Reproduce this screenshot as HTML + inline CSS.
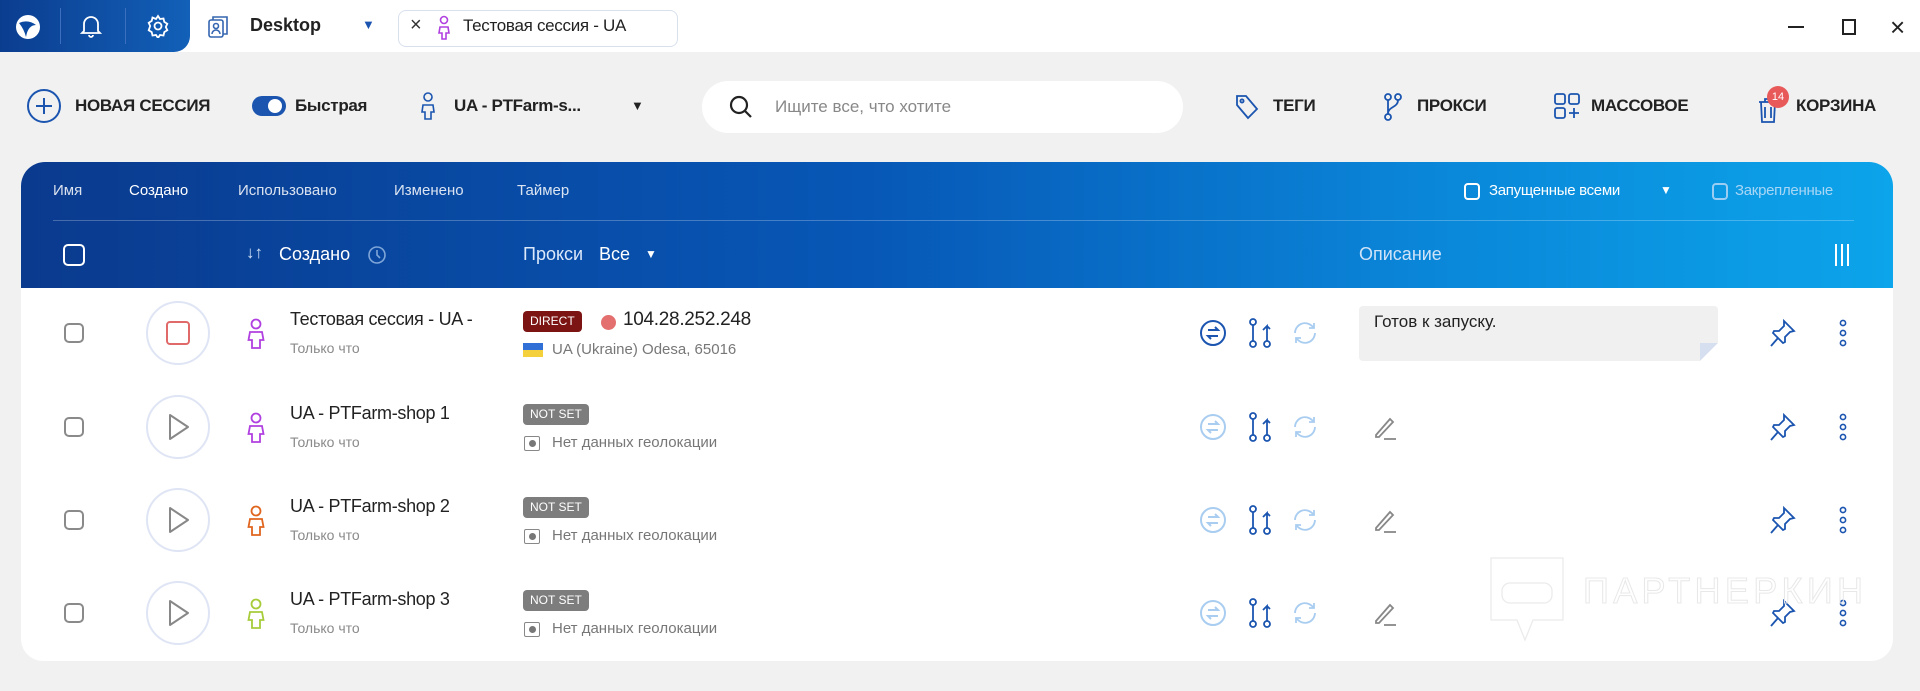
<!DOCTYPE html>
<html><head><meta charset="utf-8"><style>
*{margin:0;padding:0;box-sizing:border-box}
body{width:1920px;height:691px;background:#f1f1f1;font-family:"Liberation Sans","DejaVu Sans",sans-serif;position:relative;overflow:hidden;color:#222}
.a{position:absolute;white-space:nowrap}
.tb{position:absolute;left:0;top:0;width:1920px;height:52px;background:#fff}
.bluetab{position:absolute;left:0;top:0;width:190px;height:52px;background:linear-gradient(90deg,#0b3d8f,#1260b8);border-bottom-right-radius:16px}
.hdr{position:absolute;left:21px;top:162px;width:1872px;height:126px;border-radius:24px 24px 0 0;background:linear-gradient(90deg,#0a3a8e 0%,#0757b6 45%,#0a86d8 75%,#0ca4ea 100%)}
.body{position:absolute;left:21px;top:288px;width:1872px;height:373px;background:#fff;border-radius:0 0 22px 22px}
.hw{color:#fff;font-size:15px}
.cb{position:absolute;width:20px;height:20px;border:2px solid #8a8a8a;border-radius:5px}
.ring{position:absolute;width:64px;height:64px;border:2px solid #dfe5f4;border-radius:50%}
.nm{font-size:18px;color:#222;letter-spacing:-0.3px}
.sub{font-size:14px;color:#8a8a8a}
.badge{position:absolute;height:21px;padding:0 7px;border-radius:4px;color:#fff;font-size:12px;line-height:21px}
.geo{font-size:15px;color:#777}
.tool{font-size:17px;font-weight:bold;color:#222;letter-spacing:-0.3px}
</style></head><body>
<div class="tb"></div>
<div class="bluetab"></div>
<svg class="a" style="left:14px;top:13px" width="28" height="28" viewBox="0 0 28 28"><circle cx="14" cy="14" r="12" fill="#fff"/><path d="M5 10 Q14 6 22 12 Q14 12 12 24 Q10 16 5 10Z" fill="#0b4aa0"/></svg>
<div class="a" style="left:60px;top:8px;width:1px;height:36px;background:#3c6fc0"></div>
<svg class="a" style="left:80px;top:14px" width="22" height="24" viewBox="0 0 22 24" fill="none" stroke="#fff" stroke-width="1.8"><path d="M4 17V10a7 7 0 0 1 14 0v7l2 2H2z"/><path d="M9 21a2 2 0 0 0 4 0"/></svg>
<div class="a" style="left:125px;top:8px;width:1px;height:36px;background:#3c6fc0"></div>
<svg class="a" style="left:146px;top:14px" width="24" height="24" viewBox="0 0 24 24" fill="none" stroke="#fff" stroke-width="1.8"><circle cx="12" cy="12" r="3.5"/><path d="M12 2l2 3 3.5-.5.8 3.4 3 1.9-1.5 3.2 1.5 3.2-3 1.9-.8 3.4-3.5-.5-2 3-2-3-3.5.5-.8-3.4-3-1.9L4.2 12 2.7 8.8l3-1.9.8-3.4L10 5z"/></svg>
<svg class="a" style="left:206px;top:14px" width="24" height="26" viewBox="0 0 24 26" fill="none" stroke="#3566b0" stroke-width="1.6"><rect x="3" y="6" width="14" height="17" rx="2"/><path d="M7 6V3h14v17h-4"/><circle cx="10" cy="12" r="2.5"/><path d="M6 20a4 4 0 0 1 8 0"/></svg>
<div class="a" style="left:250px;top:15px;font-size:18px;font-weight:bold;color:#222">Desktop</div>
<div class="a" style="left:362px;top:17px;font-size:13px;color:#1b55b0">▼</div>
<div class="a" style="left:398px;top:10px;width:280px;height:37px;border:1px solid #d8e0ee;border-radius:8px;background:#fff"></div>
<div class="a" style="left:410px;top:14px;font-size:20px;color:#333">×</div>
<svg class="a" style="left:437px;top:15px" width="14" height="26" viewBox="0 0 14 26" fill="none" stroke="#b040e0" stroke-width="1.6"><circle cx="7" cy="5" r="3.5"/><path d="M3 12h8l1 6H9v6H5v-6H2z"/></svg>
<div class="a" style="left:463px;top:16px;font-size:17px;color:#222;letter-spacing:-0.3px">Тестовая сессия - UA</div>
<div class="a" style="left:1788px;top:26px;width:16px;height:2px;background:#222"></div>
<div class="a" style="left:1842px;top:19px;width:14px;height:16px;border:2px solid #222"></div>
<div class="a" style="left:1890px;top:12px;font-size:26px;color:#222">×</div>

<svg class="a" style="left:26px;top:88px" width="36" height="36" viewBox="0 0 36 36" fill="none" stroke="#1b55b0" stroke-width="2"><circle cx="18" cy="18" r="16"/><path d="M18 10v16M10 18h16"/></svg>
<div class="a tool" style="left:75px;top:96px">НОВАЯ СЕССИЯ</div>
<div class="a" style="left:252px;top:96px;width:34px;height:20px;border-radius:10px;background:#1b55b0"></div>
<div class="a" style="left:268px;top:99px;width:14px;height:14px;border-radius:50%;background:#fff"></div>
<div class="a tool" style="left:295px;top:96px">Быстрая</div>
<svg class="a" style="left:420px;top:91px" width="16" height="30" viewBox="0 0 16 30" fill="none" stroke="#1b55b0" stroke-width="1.6"><circle cx="8" cy="6" r="4"/><path d="M3 14h10l1 7h-3v7H5v-7H2z"/></svg>
<div class="a tool" style="left:454px;top:96px">UA - PTFarm-s...</div>
<div class="a" style="left:631px;top:98px;font-size:13px">▼</div>
<div class="a" style="left:702px;top:81px;width:481px;height:52px;border-radius:26px;background:#fff"></div>
<svg class="a" style="left:727px;top:93px" width="28" height="28" viewBox="0 0 28 28" fill="none" stroke="#222" stroke-width="2.2"><circle cx="12" cy="12" r="8"/><path d="M18 18l6 6"/></svg>
<div class="a" style="left:775px;top:97px;font-size:17px;color:#888">Ищите все, что хотите</div>
<svg class="a" style="left:1234px;top:93px" width="26" height="28" viewBox="0 0 26 28" fill="none" stroke="#1b55b0" stroke-width="1.8"><path d="M3 3h9l11 13-9 9L3 12z"/><circle cx="8" cy="8" r="1.6"/></svg>
<div class="a tool" style="left:1273px;top:96px">ТЕГИ</div>
<svg class="a" style="left:1382px;top:92px" width="22" height="30" viewBox="0 0 22 30" fill="none" stroke="#1b55b0" stroke-width="1.8"><circle cx="6" cy="5" r="3"/><circle cx="16" cy="5" r="3"/><circle cx="6" cy="25" r="3"/><path d="M6 8v14M16 8c0 8-10 6-10 14"/></svg>
<div class="a tool" style="left:1417px;top:96px">ПРОКСИ</div>
<svg class="a" style="left:1553px;top:92px" width="28" height="28" viewBox="0 0 28 28" fill="none" stroke="#1b55b0" stroke-width="1.8"><rect x="2" y="2" width="10" height="10" rx="2"/><rect x="16" y="2" width="10" height="10" rx="2"/><rect x="2" y="16" width="10" height="10" rx="2"/><path d="M21 16v10M16 21h10"/></svg>
<div class="a tool" style="left:1591px;top:96px">МАССОВОЕ</div>
<svg class="a" style="left:1757px;top:96px" width="22" height="28" viewBox="0 0 22 28" fill="none" stroke="#1b55b0" stroke-width="1.8"><path d="M2 6h18M4 6l1 20h12l1-20M8 11v11M14 11v11M8 6V3h6v3"/></svg>
<div class="a" style="left:1767px;top:86px;width:22px;height:22px;border-radius:50%;background:#e85a5a;color:#fff;font-size:11px;line-height:22px;text-align:center">14</div>
<div class="a tool" style="left:1796px;top:96px">КОРЗИНА</div>

<div class="hdr"></div>
<div class="a hw" style="left:53px;top:182px;opacity:.85">Имя</div>
<div class="a hw" style="left:129px;top:182px">Создано</div>
<div class="a hw" style="left:238px;top:182px;opacity:.85">Использовано</div>
<div class="a hw" style="left:394px;top:182px;opacity:.85">Изменено</div>
<div class="a hw" style="left:517px;top:182px;opacity:.85">Таймер</div>
<div class="a" style="left:1464px;top:183px;width:16px;height:17px;border:2px solid #fff;border-radius:4px"></div>
<div class="a hw" style="left:1489px;top:182px;letter-spacing:-0.3px">Запущенные всеми</div>
<div class="a" style="left:1660px;top:183px;font-size:12px;color:#fff">▼</div>
<div class="a" style="left:1712px;top:183px;width:16px;height:17px;border:2px solid #9ccdf2;border-radius:4px"></div>
<div class="a hw" style="left:1735px;top:182px;color:#a8d6f5;letter-spacing:-0.3px">Закрепленные</div>
<div class="a" style="left:53px;top:220px;width:1801px;height:1px;background:rgba(255,255,255,.25)"></div>
<div class="a" style="left:63px;top:244px;width:22px;height:22px;border:2.5px solid #fff;border-radius:5px"></div>
<div class="a" style="left:246px;top:243px;font-size:17px;color:#cfe0f5">↓↑</div>
<div class="a" style="left:279px;top:244px;font-size:18px;color:#fff">Создано</div>
<svg class="a" style="left:367px;top:244px" width="20" height="22" viewBox="0 0 20 22" fill="none" stroke="#7fa6d8" stroke-width="1.6"><circle cx="10" cy="11" r="8"/><path d="M10 6v5l3 3"/></svg>
<div class="a" style="left:523px;top:244px;font-size:18px;color:#dce9fa">Прокси</div>
<div class="a" style="left:599px;top:244px;font-size:18px;color:#fff">Все</div>
<div class="a" style="left:645px;top:247px;font-size:12px;color:#fff">▼</div>
<div class="a" style="left:1359px;top:244px;font-size:18px;color:#cfe3f8">Описание</div>
<div class="a" style="left:1835px;top:244px;width:14px;height:22px;border-left:2px solid #fff;border-right:2px solid #fff"><div style="margin:0 auto;width:2px;height:22px;background:#fff"></div></div>

<div class="body"></div>

<div class="cb" style="left:64px;top:323px"></div>
<div class="ring" style="left:146px;top:301px"></div>
<div class="a" style="left:166px;top:321px;width:24px;height:24px;border:2px solid #e06a6a;border-radius:4px"></div>
<svg class="a" style="left:247px;top:318px" width="18" height="32" viewBox="0 0 18 32" fill="none" stroke="#b040e0" stroke-width="1.8"><circle cx="9" cy="6" r="4.5"/><path d="M3 14h12l1.5 8H13v8H5v-8H1.5z"/></svg>
<div class="a nm" style="left:290px;top:309px">Тестовая сессия - UA -</div>
<div class="a sub" style="left:290px;top:340px">Только что</div>
<div class="badge" style="left:523px;top:311px;background:#7c1414">DIRECT</div>
<div class="a" style="left:601px;top:315px;width:15px;height:15px;border-radius:50%;background:#e46f6f"></div>
<div class="a" style="left:623px;top:309px;font-size:19px;color:#222;letter-spacing:-0.3px">104.28.252.248</div>
<div class="a" style="left:523px;top:343px;width:20px;height:7px;background:#2f6fd6"></div>
<div class="a" style="left:523px;top:350px;width:20px;height:7px;background:#f4d03c"></div>
<div class="a geo" style="left:552px;top:341px">UA (Ukraine) Odesa, 65016</div>
<div class="a" style="left:1359px;top:306px;width:359px;height:55px;background:#f0f0f0;border-radius:4px"></div>
<svg class="a" style="left:1700px;top:343px" width="18" height="18"><path d="M0 18L18 0H0z" fill="#d5dff0"/><path d="M0 18L18 0V18z" fill="#fff"/></svg>
<div class="a" style="left:1374px;top:312px;font-size:17px;color:#222">Готов к запуску.</div>

<div class="cb" style="left:64px;top:417px"></div>
<div class="cb" style="left:64px;top:510px"></div>
<div class="cb" style="left:64px;top:603px"></div>
<div class="ring" style="left:146px;top:395px"></div>
<div class="ring" style="left:146px;top:488px"></div>
<div class="ring" style="left:146px;top:581px"></div>
<svg class="a" style="left:166px;top:412px" width="26" height="30" viewBox="0 0 26 30" fill="none" stroke="#888" stroke-width="2"><path d="M4 3l18 12L4 27z" stroke-linejoin="round"/></svg>
<svg class="a" style="left:166px;top:505px" width="26" height="30" viewBox="0 0 26 30" fill="none" stroke="#888" stroke-width="2"><path d="M4 3l18 12L4 27z" stroke-linejoin="round"/></svg>
<svg class="a" style="left:166px;top:598px" width="26" height="30" viewBox="0 0 26 30" fill="none" stroke="#888" stroke-width="2"><path d="M4 3l18 12L4 27z" stroke-linejoin="round"/></svg>
<svg class="a" style="left:247px;top:412px" width="18" height="32" viewBox="0 0 18 32" fill="none" stroke="#b040e0" stroke-width="1.8"><circle cx="9" cy="6" r="4.5"/><path d="M3 14h12l1.5 8H13v8H5v-8H1.5z"/></svg>
<svg class="a" style="left:247px;top:505px" width="18" height="32" viewBox="0 0 18 32" fill="none" stroke="#e0651f" stroke-width="1.8"><circle cx="9" cy="6" r="4.5"/><path d="M3 14h12l1.5 8H13v8H5v-8H1.5z"/></svg>
<svg class="a" style="left:247px;top:598px" width="18" height="32" viewBox="0 0 18 32" fill="none" stroke="#a6cc3a" stroke-width="1.8"><circle cx="9" cy="6" r="4.5"/><path d="M3 14h12l1.5 8H13v8H5v-8H1.5z"/></svg>
<div class="a nm" style="left:290px;top:403px">UA - PTFarm-shop 1</div>
<div class="a nm" style="left:290px;top:496px">UA - PTFarm-shop 2</div>
<div class="a nm" style="left:290px;top:589px">UA - PTFarm-shop 3</div>
<div class="a sub" style="left:290px;top:434px">Только что</div>
<div class="a sub" style="left:290px;top:527px">Только что</div>
<div class="a sub" style="left:290px;top:620px">Только что</div>
<div class="badge" style="left:523px;top:404px;background:#7d7d7d">NOT SET</div>
<div class="badge" style="left:523px;top:497px;background:#7d7d7d">NOT SET</div>
<div class="badge" style="left:523px;top:590px;background:#7d7d7d">NOT SET</div>
<div class="a" style="left:524px;top:436px;width:16px;height:15px;border:1.5px solid #888;border-radius:2px"><div style="width:7px;height:7px;background:#777;border-radius:50%;margin:2.5px auto"></div></div>
<div class="a" style="left:524px;top:529px;width:16px;height:15px;border:1.5px solid #888;border-radius:2px"><div style="width:7px;height:7px;background:#777;border-radius:50%;margin:2.5px auto"></div></div>
<div class="a" style="left:524px;top:622px;width:16px;height:15px;border:1.5px solid #888;border-radius:2px"><div style="width:7px;height:7px;background:#777;border-radius:50%;margin:2.5px auto"></div></div>
<div class="a geo" style="left:552px;top:434px">Нет данных геолокации</div>
<div class="a geo" style="left:552px;top:527px">Нет данных геолокации</div>
<div class="a geo" style="left:552px;top:620px">Нет данных геолокации</div>

<svg width="0" height="0" style="position:absolute"><defs>
<g id="swap"><circle cx="14" cy="14" r="12"/><path d="M9 11h10l-3-3M19 17H9l3 3"/></g>
<g id="merge"><circle cx="5" cy="4" r="3"/><circle cx="5" cy="26" r="3"/><circle cx="19" cy="26" r="3"/><path d="M5 7v16M19 23V8l-4 4M19 8l3 3"/></g>
<g id="ref"><path d="M4 14a10 10 0 0 1 17-7l2 2M24 14a10 10 0 0 1-17 7l-2-2"/><path d="M23 4v5h-5M5 24v-5h5"/></g>
<g id="pin"><path d="M16 2l10 10-4 1-5 5 0 5-2 1-5-5-7 8 7-8-5-5 1-2 5 0 5-5z"/></g>
<g id="pen"><path d="M4 22L18 6l3 3L7 24H4z"/><path d="M12 26h12"/></g>
</defs></svg>
<svg class="a" style="left:1199px;top:319px" width="28" height="28" fill="none" stroke="#1b55b0" stroke-width="2"><use href="#swap"/></svg>
<svg class="a" style="left:1248px;top:318px" width="24" height="32" fill="none" stroke="#1b55b0" stroke-width="1.8"><use href="#merge"/></svg>
<svg class="a" style="left:1291px;top:319px" width="28" height="28" fill="none" stroke="#a9cdf0" stroke-width="1.8"><use href="#ref"/></svg>
<svg class="a" style="left:1199px;top:413px" width="28" height="28" fill="none" stroke="#a9cdf0" stroke-width="2"><use href="#swap"/></svg>
<svg class="a" style="left:1199px;top:506px" width="28" height="28" fill="none" stroke="#a9cdf0" stroke-width="2"><use href="#swap"/></svg>
<svg class="a" style="left:1199px;top:599px" width="28" height="28" fill="none" stroke="#a9cdf0" stroke-width="2"><use href="#swap"/></svg>
<svg class="a" style="left:1248px;top:412px" width="24" height="32" fill="none" stroke="#1b55b0" stroke-width="1.8"><use href="#merge"/></svg>
<svg class="a" style="left:1248px;top:505px" width="24" height="32" fill="none" stroke="#1b55b0" stroke-width="1.8"><use href="#merge"/></svg>
<svg class="a" style="left:1248px;top:598px" width="24" height="32" fill="none" stroke="#1b55b0" stroke-width="1.8"><use href="#merge"/></svg>
<svg class="a" style="left:1291px;top:413px" width="28" height="28" fill="none" stroke="#a9cdf0" stroke-width="1.8"><use href="#ref"/></svg>
<svg class="a" style="left:1291px;top:506px" width="28" height="28" fill="none" stroke="#a9cdf0" stroke-width="1.8"><use href="#ref"/></svg>
<svg class="a" style="left:1291px;top:599px" width="28" height="28" fill="none" stroke="#a9cdf0" stroke-width="1.8"><use href="#ref"/></svg>
<svg class="a" style="left:1372px;top:413px" width="28" height="28" fill="none" stroke="#888" stroke-width="1.8"><use href="#pen"/></svg>
<svg class="a" style="left:1372px;top:506px" width="28" height="28" fill="none" stroke="#888" stroke-width="1.8"><use href="#pen"/></svg>
<svg class="a" style="left:1372px;top:599px" width="28" height="28" fill="none" stroke="#888" stroke-width="1.8"><use href="#pen"/></svg>
<svg class="a" style="left:1768px;top:319px" width="30" height="30" fill="none" stroke="#1b55b0" stroke-width="1.8"><use href="#pin"/></svg>
<svg class="a" style="left:1768px;top:413px" width="30" height="30" fill="none" stroke="#1b55b0" stroke-width="1.8"><use href="#pin"/></svg>
<svg class="a" style="left:1768px;top:506px" width="30" height="30" fill="none" stroke="#1b55b0" stroke-width="1.8"><use href="#pin"/></svg>
<svg class="a" style="left:1768px;top:599px" width="30" height="30" fill="none" stroke="#1b55b0" stroke-width="1.8"><use href="#pin"/></svg>
<svg class="a" style="left:1837px;top:319px" width="12" height="30" fill="none" stroke="#1b55b0" stroke-width="1.6"><circle cx="6" cy="4" r="2.6"/><circle cx="6" cy="14" r="2.6"/><circle cx="6" cy="24" r="2.6"/></svg>
<svg class="a" style="left:1837px;top:413px" width="12" height="30" fill="none" stroke="#1b55b0" stroke-width="1.6"><circle cx="6" cy="4" r="2.6"/><circle cx="6" cy="14" r="2.6"/><circle cx="6" cy="24" r="2.6"/></svg>
<svg class="a" style="left:1837px;top:506px" width="12" height="30" fill="none" stroke="#1b55b0" stroke-width="1.6"><circle cx="6" cy="4" r="2.6"/><circle cx="6" cy="14" r="2.6"/><circle cx="6" cy="24" r="2.6"/></svg>
<svg class="a" style="left:1837px;top:599px" width="12" height="30" fill="none" stroke="#1b55b0" stroke-width="1.6"><circle cx="6" cy="4" r="2.6"/><circle cx="6" cy="14" r="2.6"/><circle cx="6" cy="24" r="2.6"/></svg>

<svg class="a" style="left:1488px;top:555px" width="390" height="90" fill="none" stroke="#ebebeb" stroke-width="1.3"><path d="M3 3h72v62H45l-8 20-8-20H3z"/><rect x="14" y="28" width="50" height="20" rx="8"/><text x="95" y="48" font-family="Liberation Sans" font-size="36" fill="none" stroke="#e8e8e8" stroke-width="1" textLength="280">ПАРТНЕРКИН</text></svg>
</body></html>
